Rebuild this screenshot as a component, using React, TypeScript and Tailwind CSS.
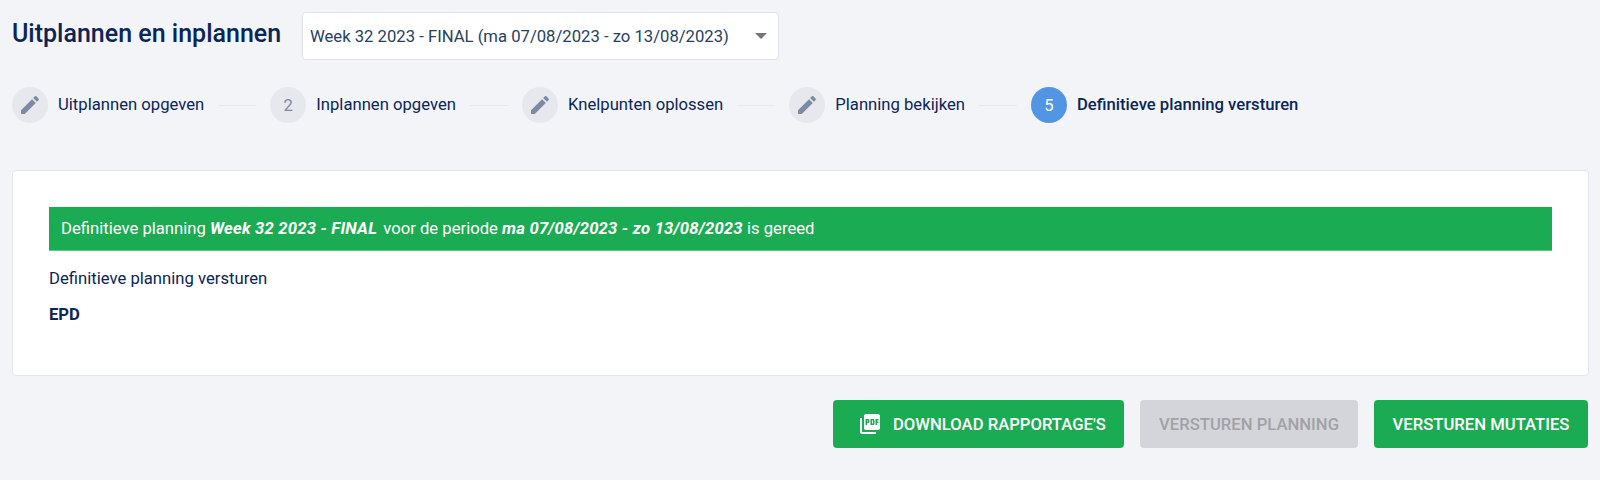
const editPath =
  'M3 17.25V21h3.75L17.81 9.94l-3.75-3.75L3 17.25zM20.71 7.04c.39-.39.39-1.02 0-1.41l-2.34-2.34c-.39-.39-1.02-.39-1.41 0l-1.83 1.83 3.75 3.75 1.83-1.83z';

const pdfPath =
  'M20 2H8c-1.1 0-2 .9-2 2v12c0 1.1.9 2 2 2h12c1.1 0 2-.9 2-2V4c0-1.1-.9-2-2-2zm-8.5 7.5c0 .83-.67 1.5-1.5 1.5H9v2H7.5V7H10c.83 0 1.5.67 1.5 1.5v1zm5 2c0 .83-.67 1.5-1.5 1.5h-2.5V7H15c.83 0 1.5.67 1.5 1.5v3zm4-3H19v1h1.5V11H19v2h-1.5V7h3v1.5zM9 9.5h1v-1H9v1zM4 6H2v14c0 1.1.9 2 2 2h14v-2H4V6zm10 5.5h1v-3h-1v3z';

function Step({ label, number, last }: { label: string; number?: number; last?: boolean }) {
  return (
    <div className="flex items-center">
      <div
        className={`flex h-9 w-9 shrink-0 items-center justify-center rounded-full text-[16.67px] ${
          last ? 'bg-[#5295e5] text-white' : 'bg-[#e6e8ee] text-[#7d8aa3]'
        }`}
      >
        {number ?? (
          <svg viewBox="0 0 24 24" className="h-6 w-6 fill-[#7d8aa3]">
            <path d={editPath} />
          </svg>
        )}
      </div>
      <span className={`mb-[2px] ml-[10px] text-[16.67px] text-[#0b2559] ${last ? 'font-medium' : ''}`}>{label}</span>
      {!last && <div className="mx-[14px] h-px w-[38px] bg-[#e6e8ee]" />}
    </div>
  );
}

export default function App() {
  return (
    <div className="h-[480px] overflow-hidden bg-[#f3f4f8] pl-3 pr-[11px] pt-3 font-['Roboto',sans-serif] text-[#0b2559]">
      {/* Header */}
      <div className="flex items-center">
        <h1 className="mb-[4px] w-[290px] text-[25px] font-medium">Uitplannen en inplannen</h1>
        <div className="flex h-12 w-[477px] items-center justify-between rounded border border-[#e0e2e8] bg-white pl-[7px] pr-[11px] text-[16.67px] text-[#27405f]">
          <span>Week 32 2023 - FINAL (ma 07/08/2023 - zo 13/08/2023)</span>
          <div className="h-0 w-0 border-x-[6px] border-t-[6px] border-x-transparent border-t-[#757575]" />
        </div>
      </div>

      {/* Steps */}
      <div className="mt-[27px] flex items-center">
        <Step label="Uitplannen opgeven" />
        <Step label="Inplannen opgeven" number={2} />
        <Step label="Knelpunten oplossen" />
        <Step label="Planning bekijken" />
        <Step label="Definitieve planning versturen" number={5} last />
      </div>

      {/* Card */}
      <div className="mt-[47px] h-[206px] rounded border border-[#e4e6eb] bg-white px-9 pt-9">
        <div className="flex h-[44px] items-center border-b border-[#5fc583] bg-[#1bab52] px-3 text-[16.67px] text-white">
          <span className="whitespace-pre">
            Definitieve planning <b className="mr-[2px] font-bold italic tracking-[0.2px]">Week 32 2023 - FINAL</b> voor de periode{' '}
            <b className="font-bold italic tracking-[0.2px]">ma 07/08/2023 - zo 13/08/2023</b> is gereed
          </span>
        </div>
        <p className="mt-[18px] text-[16.67px] leading-[20px]">Definitieve planning versturen</p>
        <p className="mt-4 text-[16.67px] font-bold leading-[20px]">EPD</p>
      </div>

      {/* Actions */}
      <div className="mr-px mt-6 flex justify-end gap-4 text-[16.67px] font-medium">
        <button className="flex h-12 w-[291px] items-center rounded bg-[#1bab52] pl-[25px] text-white">
          <svg viewBox="0 0 24 24" className="mr-[11px] h-6 w-6 fill-white">
            <path d={pdfPath} />
          </svg>
          DOWNLOAD RAPPORTAGE'S
        </button>
        <button className="h-12 w-[218px] rounded bg-[#d4d5da] text-[#a1a2a6]">VERSTUREN PLANNING</button>
        <button className="h-12 w-[214px] rounded bg-[#1bab52] text-white">VERSTUREN MUTATIES</button>
      </div>
    </div>
  );
}
